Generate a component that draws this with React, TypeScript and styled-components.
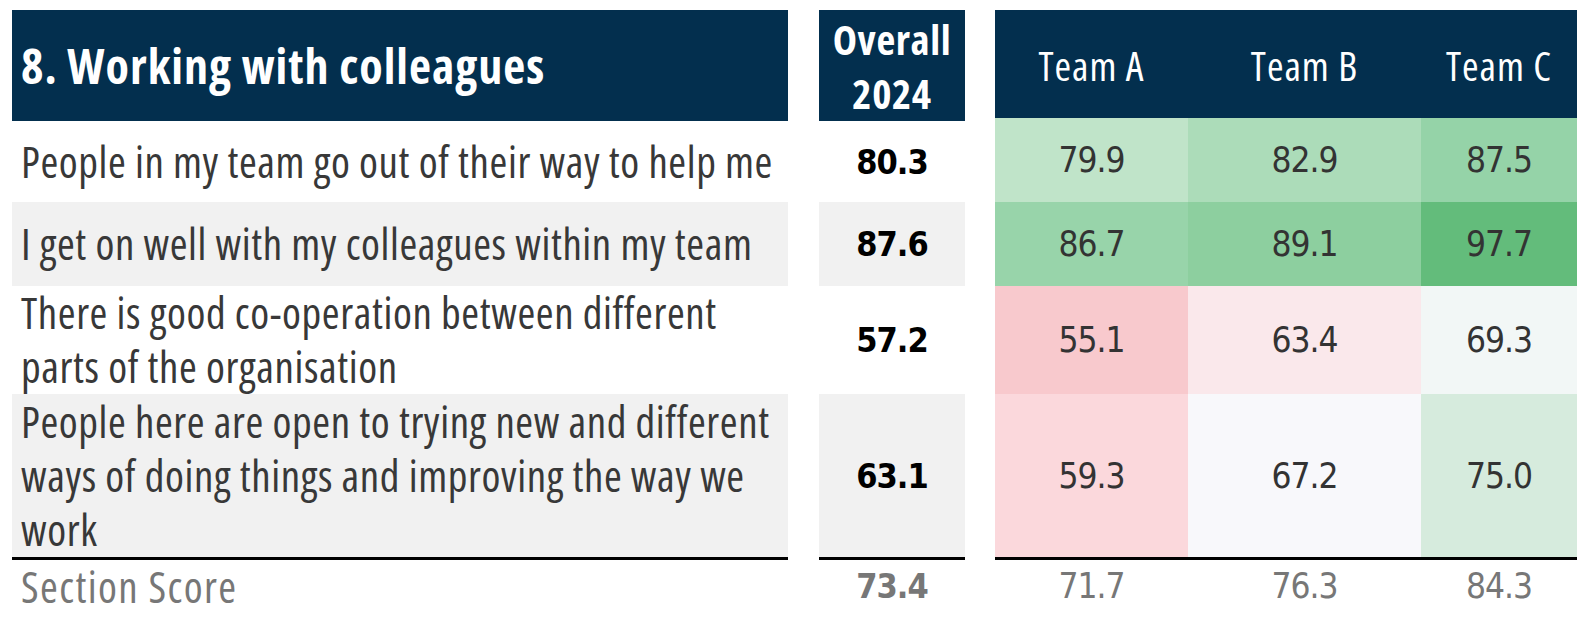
import React from "react";
import styled, { createGlobalStyle } from "styled-components";

const GlobalStyle = createGlobalStyle`
  html, body {
    margin: 0;
    padding: 0;
    background: #ffffff;
  }
`;

const NAVY = "#032f4e";
// Condensed Open Sans stands in for the sheet's narrow text face
const SANS = `"Open Sans", "DejaVu Sans Condensed", "Liberation Sans", sans-serif`;
const DIGITS = `"DejaVu Sans Condensed", "Liberation Sans", sans-serif`;

type Question = {
  text: string;
  overall: string;
  height: number;
  shaded: boolean;
  teams: { value: string; bg: string }[];
};

const questions: Question[] = [
  {
    text: "People in my team go out of their way to help me",
    overall: "80.3",
    height: 81,
    shaded: false,
    teams: [
      { value: "79.9", bg: "#c0e4c9" },
      { value: "82.9", bg: "#acdcb9" },
      { value: "87.5", bg: "#95d3a8" },
    ],
  },
  {
    text: "I get on well with my colleagues within my team",
    overall: "87.6",
    height: 84,
    shaded: true,
    teams: [
      { value: "86.7", bg: "#98d4aa" },
      { value: "89.1", bg: "#8dcf9f" },
      { value: "97.7", bg: "#63bc7b" },
    ],
  },
  {
    text: "There is good co-operation between different parts of the organisation",
    overall: "57.2",
    height: 108,
    shaded: false,
    teams: [
      { value: "55.1", bg: "#f8c9cd" },
      { value: "63.4", bg: "#fae8eb" },
      { value: "69.3", bg: "#f2f7f6" },
    ],
  },
  {
    text: "People here are open to trying new and different ways of doing things and improving the way we work",
    overall: "63.1",
    height: 163,
    shaded: true,
    teams: [
      { value: "59.3", bg: "#fbd8dc" },
      { value: "67.2", bg: "#f8f8fb" },
      { value: "75.0", bg: "#d6ebdd" },
    ],
  },
];

const teamNames = ["Team A", "Team B", "Team C"];
const sectionScores = ["71.7", "76.3", "84.3"];
const teamColumns = "193px 233px 156px";

const Page = styled.div`
  display: flex;
  align-items: flex-start;
  padding: 10px 0 0 12px;
  font-family: ${SANS};
  font-stretch: 75%;
`;

const Panel = styled.div<{ $width: number; $offset?: number }>`
  display: flex;
  flex-direction: column;
  width: ${({ $width }) => $width}px;
  margin-left: ${({ $offset }) => $offset ?? 0}px;
`;

const TitleCell = styled.div`
  height: 111px;
  display: flex;
  align-items: center;
  padding-left: 9px;
  background: ${NAVY};
  color: #ffffff;
  font-size: 48px;
  font-weight: 700;
  letter-spacing: 1px;
`;

const OverallHead = styled.div`
  height: 111px;
  display: flex;
  align-items: center;
  justify-content: center;
  text-align: center;
  background: ${NAVY};
  color: #ffffff;
  font-size: 41px;
  font-weight: 700;
  letter-spacing: 0.6px;
  line-height: 54px;
`;

const QuestionCell = styled.div<{ $height: number; $shaded: boolean }>`
  height: ${({ $height }) => $height}px;
  display: flex;
  align-items: center;
  padding: 0 4px 0 9px;
  background: ${({ $shaded }) => ($shaded ? "#f1f1f1" : "transparent")};
  color: #383838;
  font-size: 43px;
  letter-spacing: 0.6px;
  line-height: 54px;
`;

const OverallCell = styled.div<{ $height: number; $shaded: boolean }>`
  height: ${({ $height }) => $height}px;
  display: flex;
  align-items: center;
  justify-content: center;
  background: ${({ $shaded }) => ($shaded ? "#f1f1f1" : "transparent")};
  color: #000000;
  font-family: ${DIGITS};
  font-size: 34px;
  font-weight: 700;
  letter-spacing: -1px;
`;

const TeamHeadRow = styled.div`
  height: 108px;
  display: grid;
  grid-template-columns: ${teamColumns};
  background: ${NAVY};
`;

const TeamName = styled.div`
  display: flex;
  align-items: center;
  justify-content: center;
  padding-top: 3px;
  color: #ffffff;
  font-size: 40px;
  letter-spacing: 1px;
`;

const TeamRow = styled.div<{ $height: number }>`
  height: ${({ $height }) => $height}px;
  display: grid;
  grid-template-columns: ${teamColumns};
`;

const TeamCell = styled.div<{ $bg: string }>`
  display: flex;
  align-items: center;
  justify-content: center;
  background: ${({ $bg }) => $bg};
  color: #333333;
  font-family: ${DIGITS};
  font-size: 35px;
  letter-spacing: -1px;
`;

const Rule = styled.div`
  height: 3px;
  background: #000000;
`;

const ScoreLabel = styled.div`
  height: 52px;
  display: flex;
  align-items: center;
  padding-left: 9px;
  color: #777777;
  font-size: 43px;
  letter-spacing: 1.4px;
`;

const ScoreValue = styled.div<{ $bold?: boolean }>`
  height: 52px;
  display: flex;
  align-items: center;
  justify-content: center;
  color: #777777;
  font-family: ${DIGITS};
  font-size: ${({ $bold }) => ($bold ? 34 : 35)}px;
  font-weight: ${({ $bold }) => ($bold ? 700 : 400)};
  letter-spacing: -1px;
`;

const ScoreRow = styled.div`
  display: grid;
  grid-template-columns: ${teamColumns};
`;

export default function App() {
  return (
    <>
      <GlobalStyle />
      <Page>
        <Panel $width={776}>
          <TitleCell>8. Working with colleagues</TitleCell>
          {questions.map((q) => (
            <QuestionCell key={q.text} $height={q.height} $shaded={q.shaded}>
              {q.text}
            </QuestionCell>
          ))}
          <Rule />
          <ScoreLabel>Section Score</ScoreLabel>
        </Panel>

        <Panel $width={146} $offset={31}>
          <OverallHead>
            Overall
            <br />
            2024
          </OverallHead>
          {questions.map((q) => (
            <OverallCell key={q.text} $height={q.height} $shaded={q.shaded}>
              {q.overall}
            </OverallCell>
          ))}
          <Rule />
          <ScoreValue $bold>73.4</ScoreValue>
        </Panel>

        <Panel $width={582} $offset={30}>
          <TeamHeadRow>
            {teamNames.map((name) => (
              <TeamName key={name}>{name}</TeamName>
            ))}
          </TeamHeadRow>
          {questions.map((q, i) => (
            <TeamRow key={q.text} $height={i === 0 ? q.height + 3 : q.height}>
              {q.teams.map((t, j) => (
                <TeamCell key={j} $bg={t.bg}>
                  {t.value}
                </TeamCell>
              ))}
            </TeamRow>
          ))}
          <Rule />
          <ScoreRow>
            {sectionScores.map((s, j) => (
              <ScoreValue key={j}>{s}</ScoreValue>
            ))}
          </ScoreRow>
        </Panel>
      </Page>
    </>
  );
}
